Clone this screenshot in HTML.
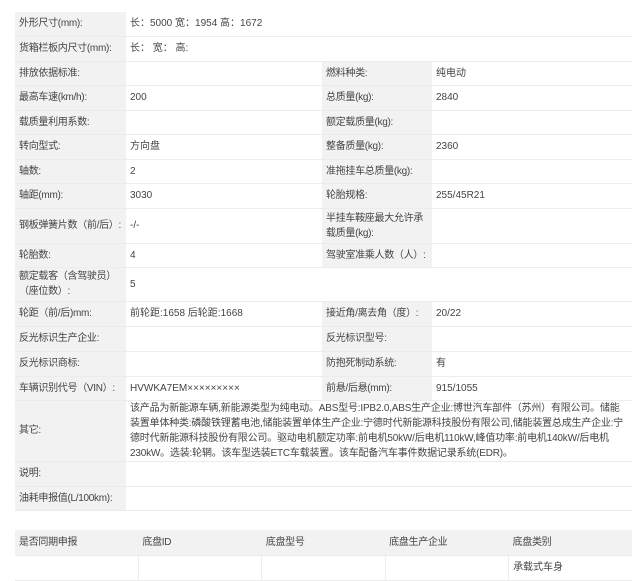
<!DOCTYPE html><html><head><meta charset="utf-8"><style>
body{margin:0;background:#fff;font-family:"Liberation Sans","Noto Sans CJK SC",sans-serif;font-size:10px;color:#444;}
table{border-collapse:collapse;position:absolute;left:15px;width:617px;table-layout:fixed}
td{padding:0 4px;border-bottom:1px solid #ececec;vertical-align:middle;line-height:15px;overflow:hidden}
.l{background:#f2f2f2;white-space:nowrap;letter-spacing:-0.3px}
.w{white-space:normal}
</style></head><body>
<table style="top:12px">
<colgroup><col style="width:111px"><col style="width:196px"><col style="width:110px"><col style="width:200px"></colgroup>
<tr style="height:24px"><td class="l">外形尺寸(mm):</td><td colspan="3">长：5000 宽：1954 高：1672</td></tr>
<tr style="height:25px"><td class="l">货箱栏板内尺寸(mm):</td><td colspan="3">长： 宽： 高:</td></tr>
<tr style="height:24px"><td class="l">排放依据标准:</td><td></td><td class="l">燃料种类:</td><td>纯电动</td></tr>
<tr style="height:25px"><td class="l">最高车速(km/h):</td><td>200</td><td class="l">总质量(kg):</td><td>2840</td></tr>
<tr style="height:24px"><td class="l">载质量利用系数:</td><td></td><td class="l">额定载质量(kg):</td><td></td></tr>
<tr style="height:25px"><td class="l">转向型式:</td><td>方向盘</td><td class="l">整备质量(kg):</td><td>2360</td></tr>
<tr style="height:24px"><td class="l">轴数:</td><td>2</td><td class="l">准拖挂车总质量(kg):</td><td></td></tr>
<tr style="height:25px"><td class="l">轴距(mm):</td><td>3030</td><td class="l">轮胎规格:</td><td>255/45R21</td></tr>
<tr style="height:35px"><td class="l">钢板弹簧片数（前/后）:</td><td>-/-</td><td class="l w">半挂车鞍座最大允许承载质量(kg):</td><td></td></tr>
<tr style="height:24px"><td class="l">轮胎数:</td><td>4</td><td class="l">驾驶室准乘人数（人）:</td><td></td></tr>
<tr style="height:34px"><td class="l w">额定载客（含驾驶员）（座位数）:</td><td colspan="3">5</td></tr>
<tr style="height:25px"><td class="l">轮距（前/后)mm:</td><td>前轮距:1658 后轮距:1668</td><td class="l">接近角/离去角（度）:</td><td>20/22</td></tr>
<tr style="height:25px"><td class="l">反光标识生产企业:</td><td></td><td class="l">反光标识型号:</td><td></td></tr>
<tr style="height:25px"><td class="l">反光标识商标:</td><td></td><td class="l">防抱死制动系统:</td><td>有</td></tr>
<tr style="height:24px"><td class="l">车辆识别代号（VIN）:</td><td>HVWKA7EM×××××××××</td><td class="l">前悬/后悬(mm):</td><td>915/1055</td></tr>
<tr style="height:61px"><td class="l">其它:</td><td colspan="3" style="letter-spacing:-0.2px">该产品为新能源车辆,新能源类型为纯电动。ABS型号:IPB2.0,ABS生产企业:博世汽车部件（苏州）有限公司。储能装置单体种类:磷酸铁锂蓄电池,储能装置单体生产企业:宁德时代新能源科技股份有限公司,储能装置总成生产企业:宁德时代新能源科技股份有限公司。驱动电机额定功率:前电机50kW/后电机110kW,峰值功率:前电机140kW/后电机230kW。选装:轮辋。该车型选装ETC车载装置。该车配备汽车事件数据记录系统(EDR)。</td></tr>
<tr style="height:25px"><td class="l">说明:</td><td colspan="3"></td></tr>
<tr style="height:24px"><td class="l">油耗申报值(L/100km):</td><td colspan="3"></td></tr>
</table>
<table style="top:530px">
<tr style="height:25px" class="l"><td>是否同期申报</td><td>底盘ID</td><td>底盘型号</td><td>底盘生产企业</td><td>底盘类别</td></tr>
<tr style="height:25px"><td style="border-right:1px solid #ececec"></td><td style="border-right:1px solid #ececec"></td><td style="border-right:1px solid #ececec"></td><td style="border-right:1px solid #ececec"></td><td>承载式车身</td></tr>
</table>
</body></html>
